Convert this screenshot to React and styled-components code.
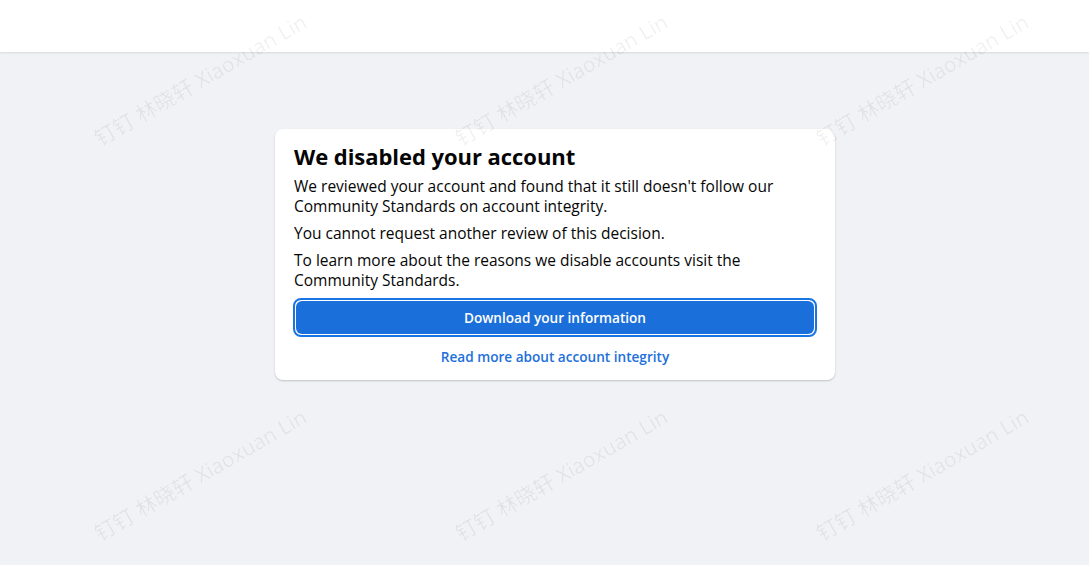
import React from "react";
import styled, { createGlobalStyle } from "styled-components";

const GlobalStyle = createGlobalStyle`
  html, body {
    margin: 0;
    padding: 0;
    background: #f0f2f5;
    font-family: "Open Sans", "Noto Sans", "Noto Sans CJK SC", sans-serif;
  }
`;

const Page = styled.div`
  position: relative;
  width: 100%;
  height: 565px;
  overflow: hidden;
  background: #f0f2f5;
  display: flex;
  flex-direction: column;
`;

const TopBar = styled.header`
  height: 52px;
  flex-shrink: 0;
  background: #fff;
  box-shadow: 0 1px 2px rgba(0, 0, 0, 0.1);
`;

const Main = styled.main`
  display: flex;
  justify-content: center;
  padding: 77px 0 0 21px;
`;

const Card = styled.section`
  width: 560px;
  box-sizing: border-box;
  background: #fff;
  border-radius: 8px;
  box-shadow: 0 1px 2px rgba(0, 0, 0, 0.2);
  padding: 12px 19px 13px 19px;
`;

const Title = styled.h1`
  margin: 0 0 5px;
  font-size: 22px;
  line-height: 30px;
  font-weight: 700;
  color: #050505;
  letter-spacing: -0.05px;
`;

const Text = styled.p`
  margin: 0 0 7px;
  max-width: 505px;
  font-size: 15.5px;
  line-height: 20px;
  color: #050505;
`;

const FocusRing = styled.div`
  margin: 8px -1px 0;
  border: 2px solid #1b74e4;
  border-radius: 8px;
  padding: 1px;
  background: #fff;
`;

const Button = styled.button`
  display: block;
  width: 100%;
  height: 33px;
  border: none;
  border-radius: 6px;
  background: #1b6fdb;
  color: #fff;
  font-family: inherit;
  font-size: 13.6px;
  font-weight: 600;
  cursor: pointer;
`;

const LinkRow = styled.div`
  margin-top: 8px;
  text-align: center;
`;

const Link = styled.a`
  color: #216fdb;
  font-size: 13.6px;
  font-weight: 600;
  text-decoration: none;
  line-height: 20px;
`;

const Watermarks = styled.div`
  position: absolute;
  inset: 0;
  pointer-events: none;
`;

const Mark = styled.span`
  position: absolute;
  white-space: nowrap;
  font-size: 21px;
  line-height: 28px;
  color: rgba(0, 0, 0, 0.065);
  transform: rotate(-30deg);
  transform-origin: 0 100%;
  font-family: "Open Sans", "Noto Sans CJK SC", sans-serif;
`;

const marks = [];
[0, 1].forEach((r) => {
  [0, 1, 2].forEach((c) => {
    marks.push({ left: 103 + c * 361, top: 124 + r * 395 });
  });
});

export default function App() {
  return (
    <Page>
      <GlobalStyle />
      <TopBar />
      <Main>
        <Card>
          <Title>We disabled your account</Title>
          <Text>
            We reviewed your account and found that it still doesn't follow
            our Community Standards on account integrity.
          </Text>
          <Text>You cannot request another review of this decision.</Text>
          <Text>
            To learn more about the reasons we disable accounts visit the
            Community Standards.
          </Text>
          <FocusRing>
            <Button>Download your information</Button>
          </FocusRing>
          <LinkRow>
            <Link href="#">Read more about account integrity</Link>
          </LinkRow>
        </Card>
      </Main>
      <Watermarks>
        {marks.map((m, i) => (
          <Mark key={i} style={{ left: m.left, top: m.top }}>
            钉钉 林晓轩 Xiaoxuan Lin
          </Mark>
        ))}
      </Watermarks>
    </Page>
  );
}
